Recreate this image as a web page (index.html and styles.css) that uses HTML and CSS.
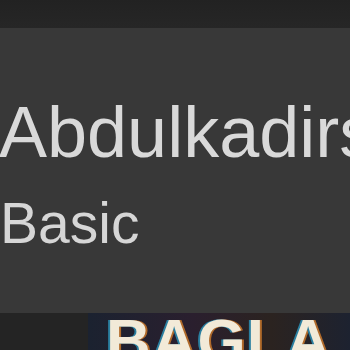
FILE: index.html
```html
<!DOCTYPE html>
<html>
<head>
<meta charset="utf-8">
<link rel="stylesheet" href="styles.css">
</head>
<body>
<div class="page">
  <div class="topbar"></div>
  <div class="profile">
    <div class="name">Abdulkadirs</div>
    <div class="plan">Basic</div>
  </div>
  <div class="shelf">
    <div class="thumb"><span class="thumb-title">BAGLA</span></div>
  </div>
</div>
</body>
</html>
```

FILE: styles.css
```css
html, body {
  margin: 0;
  padding: 0;
  background: #383838;
  overflow: hidden;
}
.page {
  width: 350px;
  height: 350px;
  display: flex;
  flex-direction: column;
  overflow: hidden;
  font-family: "Liberation Sans", Arial, sans-serif;
}
.topbar {
  height: 28px;
  flex: none;
  background: linear-gradient(#222222, #262626);
}
.profile {
  padding-top: 68px;
  display: flex;
  flex-direction: column;
  gap: 27px;
  flex: none;
}
.name {
  font-size: 72px;
  line-height: 72px;
  color: #d9d9d9;
  white-space: nowrap;
  margin-left: -1px;
}
.plan {
  font-size: 57px;
  line-height: 57px;
  color: #d6d6d6;
  white-space: nowrap;
}
.shelf {
  margin-top: 61px;
  height: 37px;
  flex: none;
  background: #242424;
  padding-left: 88px;
  display: flex;
  overflow: hidden;
}
.thumb {
  flex: 1;
  background: linear-gradient(90deg, #1b2230, #2a1f2e 40%, #2b2320 70%, #1d2230);
  padding-left: 18px;
  overflow: hidden;
}
.thumb-title {
  display: block;
  margin-top: -3px;
  font-size: 62px;
  line-height: 62px;
  font-weight: bold;
  letter-spacing: 1px;
  color: #f2ead8;
  white-space: nowrap;
  text-shadow: -2px 0 #2a7fa0, 2px 0 #b06a2a;
}
```
